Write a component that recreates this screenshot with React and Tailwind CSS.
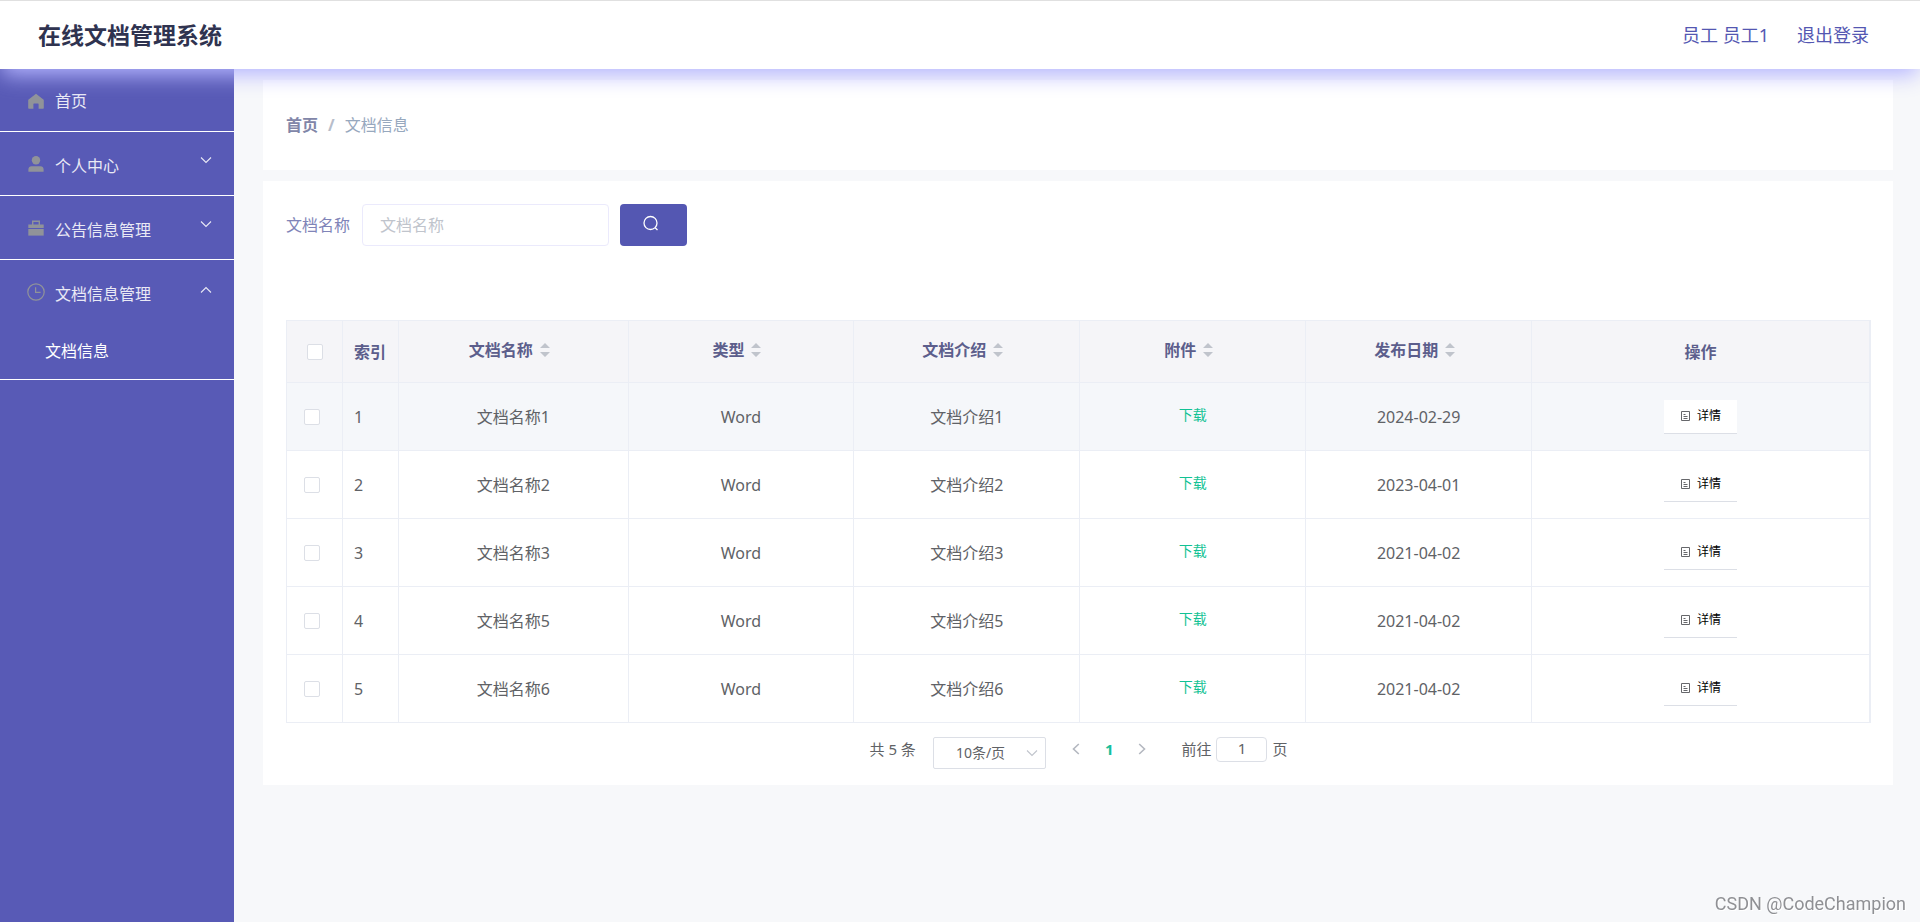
import React from "react";

const rows = [
  { id: 1, name: "文档名称1", type: "Word", intro: "文档介绍1", date: "2024-02-29" },
  { id: 2, name: "文档名称2", type: "Word", intro: "文档介绍2", date: "2023-04-01" },
  { id: 3, name: "文档名称3", type: "Word", intro: "文档介绍3", date: "2021-04-02" },
  { id: 4, name: "文档名称5", type: "Word", intro: "文档介绍5", date: "2021-04-02" },
  { id: 5, name: "文档名称6", type: "Word", intro: "文档介绍6", date: "2021-04-02" },
];

const sortable = ["文档名称", "类型", "文档介绍", "附件", "发布日期"];

function HomeIcon() {
  return (
    <svg viewBox="0 0 16 16" className="size-4 shrink-0" fill="currentColor" aria-hidden="true">
      <path d="M8 .8 15.400 6.400a1 1 0 0 1 .4.8V15a.7.7 0 0 1-.7.7H10.600V11.200a.6.6 0 0 0-.6-.6H6a.6.6 0 0 0-.6.6v4.500H.9a.7.7 0 0 1-.7-.7V7.200a1 1 0 0 1 .4-.8Z" />
    </svg>
  );
}

function UserIcon() {
  return (
    <svg viewBox="0 0 16 16" className="size-4 shrink-0" fill="currentColor" aria-hidden="true">
      <circle cx="8" cy="4.200" r="4.200" />
      <path d="M.4 15.800V13.300A3.200 3.200 0 0 1 3.600 10.300H12.400A3.200 3.200 0 0 1 15.600 13.300V15.800Z" />
    </svg>
  );
}

function BriefcaseIcon() {
  return (
    <svg viewBox="0 0 16 16" className="size-4 shrink-0" fill="currentColor" aria-hidden="true">
      <path fillRule="evenodd" d="M4 .6H12V4.400H15.700V8H.3V4.400H4ZM5.400 2V4.400H10.600V2Z" />
      <path d="M.3 9H15.700V15.600H.3Z" />
    </svg>
  );
}

function ClockIcon() {
  return (
    <svg viewBox="0 0 18 18" className="-mx-px size-[18px] shrink-0" fill="none" stroke="currentColor" strokeWidth="1.200" aria-hidden="true">
      <circle cx="9" cy="9" r="8.200" />
      <path d="M8.600 4.300V9.400H13.600" />
    </svg>
  );
}

function Chevron({ up }) {
  return (
    <svg viewBox="0 0 12 8" className="h-2 w-3" fill="none" stroke="currentColor" strokeWidth="1.100" aria-hidden="true">
      {up ? <path d="M1 6.500 6 1.500 11 6.500" /> : <path d="M1 1.500 6 6.500 11 1.500" />}
    </svg>
  );
}

function MenuLink({ icon, label }) {
  return (
    <a href="#home" className="flex h-[62px] items-center pl-7 pr-[22px] pt-px">
      <span className="text-[#909399]">{icon}</span>
      <span className="ml-[11px] flex-1 text-[#e9e9f5]">{label}</span>
    </a>
  );
}

function MenuGroup({ icon, label, open }) {
  return (
    <button type="button" aria-expanded={open} className="flex h-[63px] w-full items-center pl-7 pr-[22px] pt-px text-left text-base">
      <span className="text-[#909399]">{icon}</span>
      <span className="ml-[11px] flex-1 pt-1 text-[#e9e9f5]">{label}</span>
      <span className={open ? "pb-1 text-[#e9e9f5]" : "pb-2 text-[#e9e9f5]"}>
        <Chevron up={open} />
      </span>
    </button>
  );
}

function Check({ label }) {
  return (
    <input
      type="checkbox"
      aria-label={label}
      className="block size-4 appearance-none rounded-xs border border-[#dcdfe6] bg-white checked:bg-[#5457b2]"
    />
  );
}

const th = "border-b border-r border-[#ebeef5] p-0 font-bold";
const td = "border-b border-r border-[#ebeef5] p-0 text-center";

export default function App() {
  return (
    <div className="flex min-h-screen flex-col bg-[#f7f8fa] font-['Noto_Sans','Noto_Sans_CJK_SC',sans-serif] text-base text-[#606266]">
      <header className="relative z-10 flex h-[69px] items-center justify-between border-t border-[#e0e0e0] bg-white pl-[38px] pr-[51px] shadow-[0_8px_20px_-2px_#b5b5ff]">
        <h1 className="text-[23px] font-bold text-[#2f3350]">在线文档管理系统</h1>
        <div className="flex items-center gap-7 text-lg text-[#5457b2]">
          <span>员工 员工1</span>
          <button type="button">退出登录</button>
        </div>
      </header>

      <div className="flex flex-1">
        <nav className="w-[234px] shrink-0 bg-[#585ab6]">
          <ul>
            <li className="border-b border-white">
              <MenuLink icon={<HomeIcon />} label="首页" />
            </li>
            <li className="border-b border-white">
              <MenuGroup icon={<UserIcon />} label="个人中心" open={false} />
            </li>
            <li className="border-b border-white">
              <MenuGroup icon={<BriefcaseIcon />} label="公告信息管理" open={false} />
            </li>
            <li className="border-b border-white">
              <MenuGroup icon={<ClockIcon />} label="文档信息管理" open />
              <a href="#docs" className="flex h-14 items-center pl-[45px] text-white">
                文档信息
              </a>
            </li>
          </ul>
        </nav>

        <main className="min-w-0 flex-1 pb-6 pl-[29px] pr-[27px] pt-[11px]">
          <nav aria-label="面包屑" className="flex h-[90px] items-center bg-white px-[23px]">
            <a href="#home" className="font-bold text-[#8186a8]">首页</a>
            <span className="mx-2.5 font-bold text-[#b7bdca]">/</span>
            <span className="text-[#97a8be]">文档信息</span>
          </nav>

          <section className="mt-[11px] bg-white pb-4 pl-[23px] pr-[22px] pt-[23px]">
            <form className="flex items-center" onSubmit={(e) => e.preventDefault()}>
              <label htmlFor="docName" className="text-[#8084b8]">文档名称</label>
              <input
                id="docName"
                type="text"
                placeholder="文档名称"
                className="ml-3 h-[42px] w-[247px] rounded border border-[#ebeafc] bg-white px-[17px] outline-none placeholder:text-[#c0c4cc]"
              />
              <button type="submit" aria-label="查询" className="ml-[11px] flex h-[42px] w-[67px] items-center rounded bg-[#5457b2] pb-1 pl-[23px] text-white">
                <svg viewBox="0 0 16 16" className="size-4" fill="none" stroke="currentColor" strokeWidth="1.300" aria-hidden="true">
                  <circle cx="7.500" cy="8" r="6.500" />
                  <path d="M12.200 12.700 14.500 15" />
                </svg>
              </button>
            </form>

            <table className="mt-[74px] w-full table-fixed border-separate border-spacing-0 border-l border-r border-t border-[#ebeef5]">
              <colgroup>
                <col className="w-14" />
                <col className="w-14" />
                <col className="w-[14.5%]" />
                <col className="w-[14.27%]" />
                <col className="w-[14.27%]" />
                <col className="w-[14.27%]" />
                <col className="w-[14.27%]" />
                <col />
              </colgroup>
              <thead>
                <tr className="h-[62px] bg-[#f5f5f8] text-[#5c5e8c]">
                  <th className={th}>
                    <div className="flex justify-center">
                      <Check label="全选" />
                    </div>
                  </th>
                  <th className={th + " pl-[11px] text-left"}>索引</th>
                  {sortable.map((name) => (
                    <th key={name} className={th}>
                      <button type="button" className="inline-flex items-center pb-1 font-bold">
                        {name}
                        <svg viewBox="0 0 10 14" className="ml-[7px] mr-2 h-3.5 w-2.5" fill="#c0c4cc" aria-hidden="true">
                          <path d="M0 5 5 0 10 5ZM0 9H10L5 14Z" />
                        </svg>
                      </button>
                    </th>
                  ))}
                  <th className={th}>操作</th>
                </tr>
              </thead>
              <tbody>
                {rows.map((r, i) => (
                  <tr key={r.id} className={i === 0 ? "h-[68px] bg-[#f5f7fa]" : "h-[68px] bg-white"}>
                    <td className={td}>
                      <div className="pl-[17px]">
                        <Check label={"选择" + r.name} />
                      </div>
                    </td>
                    <td className="border-b border-r border-[#ebeef5] p-0 pl-[11px] text-left">{r.id}</td>
                    <td className={td}>{r.name}</td>
                    <td className={td}>{r.type}</td>
                    <td className={td}>{r.intro}</td>
                    <td className={td}>
                      <button type="button" className="pb-1 align-middle text-sm text-[#11c294]">下载</button>
                    </td>
                    <td className={td}>{r.date}</td>
                    <td className={td}>
                      <button type="button" className="inline-flex h-[34px] w-[73px] items-center justify-center gap-[5px] border-b border-[#dcdfe6] bg-white align-middle text-xs text-black">
                        <svg viewBox="0 0 12 12" className="size-3" fill="none" stroke="#66676b" strokeWidth="1" aria-hidden="true">
                          <path d="M1.500 1.500H9.500V10.500H1.500ZM3.500 4.500H5.500M3.500 6.500H7.500M3.500 8.500H7.500" />
                        </svg>
                        详情
                      </button>
                    </td>
                  </tr>
                ))}
              </tbody>
            </table>

            <div className="mt-3.5 flex items-start justify-center text-[15px] leading-6">
              <span>共 5 条</span>
              <span className="relative ml-[17px]">
                <select aria-label="每页条数" className="block h-8 w-[113px] appearance-none rounded-xs border border-[#dcdfe6] bg-white pl-[22px] text-sm">
                  <option>10条/页</option>
                </select>
                <span className="pointer-events-none absolute right-2 top-3 text-[#c0c4cc]">
                  <Chevron />
                </span>
              </span>
              <button type="button" aria-label="上一页" className="ml-[26px] flex h-6 w-2 items-center text-[#b4b8c0]">
                <svg viewBox="0 0 8 12" className="h-3 w-2" fill="none" stroke="currentColor" strokeWidth="1.600" aria-hidden="true">
                  <path d="M6.800 1 1.500 6 6.800 11" />
                </svg>
              </button>
              <button type="button" aria-current="page" className="ml-[25px] font-bold text-[#18be9b]">1</button>
              <button type="button" aria-label="下一页" className="ml-[25px] flex h-6 w-2 items-center text-[#b4b8c0]">
                <svg viewBox="0 0 8 12" className="h-3 w-2" fill="none" stroke="currentColor" strokeWidth="1.600" aria-hidden="true">
                  <path d="M1.200 1 6.500 6 1.200 11" />
                </svg>
              </button>
              <label htmlFor="page" className="ml-[35px]">前往</label>
              <input id="page" type="text" defaultValue="1" className="mx-[5px] h-[25px] w-[51px] rounded border border-[#dcdfe6] bg-white pb-1 text-center outline-none" />
              <span>页</span>
            </div>
          </section>
        </main>
      </div>

      <div className="fixed bottom-1.5 right-3.5 font-['Roboto',sans-serif] text-lg leading-6 text-[#8f9094] [text-shadow:1px_1px_0_#ffffff]">
        CSDN @CodeChampion
      </div>
    </div>
  );
}
